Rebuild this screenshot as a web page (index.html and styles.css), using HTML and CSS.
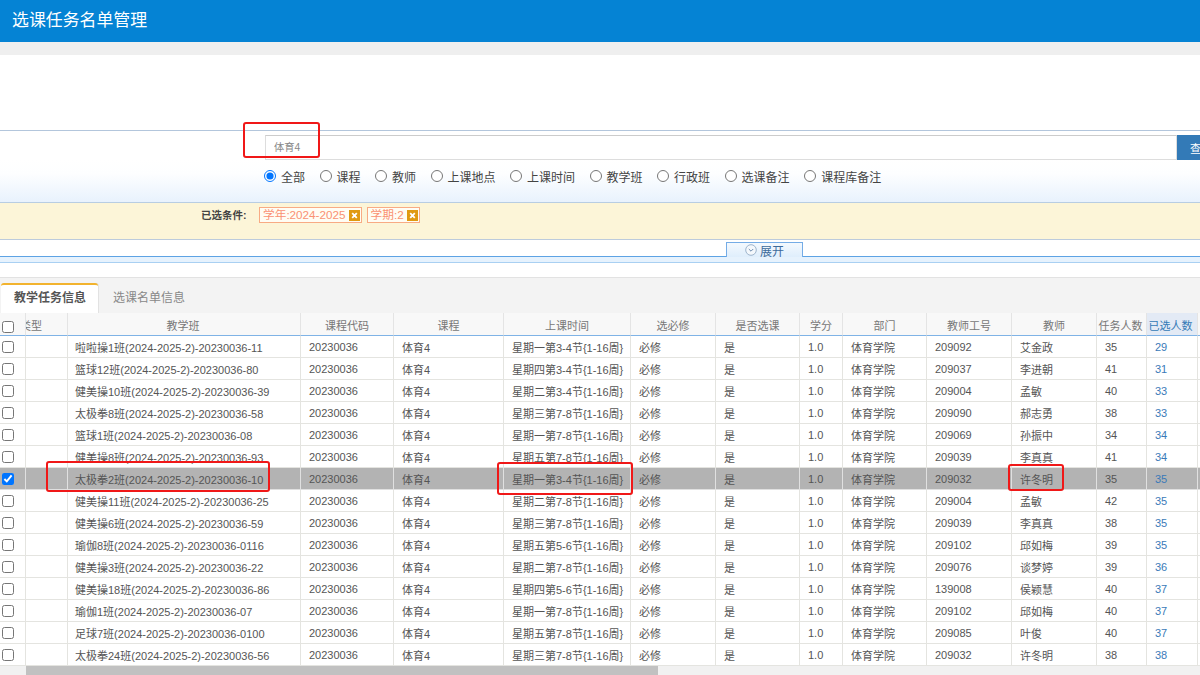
FILE: index.html
```html
<!DOCTYPE html>
<html lang="zh-CN">
<head>
  <meta charset="UTF-8" />
  <meta name="viewport" content="width=device-width, initial-scale=1.0" />
  <title>选课任务名单管理</title>
  <link rel="stylesheet" href="styles.css">
</head>
<body>
  <div class="page-title">选课任务名单管理</div>
  <div class="gray-strip"></div>
  <div class="blank-area"></div>

  <div class="search-panel">
    <div class="search-row">
      <input class="search-input" type="text" value="体育4">
      <button class="search-button">查询</button>
    </div>
    <div class="radio-row">
      <label class="radio-item"><input type="radio" name="scope" checked>全部</label>
      <label class="radio-item"><input type="radio" name="scope">课程</label>
      <label class="radio-item"><input type="radio" name="scope">教师</label>
      <label class="radio-item"><input type="radio" name="scope">上课地点</label>
      <label class="radio-item"><input type="radio" name="scope">上课时间</label>
      <label class="radio-item"><input type="radio" name="scope">教学班</label>
      <label class="radio-item"><input type="radio" name="scope">行政班</label>
      <label class="radio-item"><input type="radio" name="scope">选课备注</label>
      <label class="radio-item"><input type="radio" name="scope">课程库备注</label>
    </div>
  </div>

  <div class="filter-bar">
    <span class="filter-label">已选条件:</span>
    <span class="tag">学年:2024-2025<svg class="tag-x" viewBox="0 0 11 11"><rect width="11" height="11" fill="#e09a12"/><path d="M3.2 3.2l4.6 4.6M7.8 3.2L3.2 7.8" stroke="#fff" stroke-width="1.8"/></svg></span>
    <span class="tag">学期:2<svg class="tag-x" viewBox="0 0 11 11"><rect width="11" height="11" fill="#e09a12"/><path d="M3.2 3.2l4.6 4.6M7.8 3.2L3.2 7.8" stroke="#fff" stroke-width="1.8"/></svg></span>
  </div>

  <div class="expand-row">
    <div class="expand-tab">
      <svg class="expand-icon" viewBox="0 0 12 12"><circle cx="6" cy="6" r="5.3" fill="#f4f8fc" stroke="#9db4cc"/><path d="M3.8 5l2.2 2.2L8.2 5" fill="none" stroke="#6f8db0"/></svg>展开
    </div>
  </div>
  <div class="expand-band"></div>
  <div class="blank-gap"></div>

  <div class="tab-bar">
    <div class="tab active">教学任务信息</div>
    <div class="tab">选课名单信息</div>
  </div>

  <div class="table-wrap">
    <table class="task-table">
      <colgroup>
        <col class="c-check"><col class="c-type"><col class="c-class"><col class="c-code"><col class="c-course">
        <col class="c-time"><col class="c-req"><col class="c-sel"><col class="c-credit"><col class="c-dept">
        <col class="c-tid"><col class="c-teacher"><col class="c-task"><col class="c-chosen"><col class="c-more">
      </colgroup>
      <thead>
        <tr>
          <th class="check-cell"><input type="checkbox"></th>
          <th class="type-head">类型</th>
          <th class="class-cell">教学班</th><th>课程代码</th><th>课程</th><th>上课时间</th><th>选必修</th><th>是否选课</th>
          <th>学分</th><th>部门</th><th>教师工号</th><th>教师</th><th class="task-head">任务人数</th>
          <th class="sorted">已选人数</th><th class="more-head">选</th>
        </tr>
      </thead>
      <tbody>
        <tr><td class="check-cell"><input type="checkbox"></td><td></td><td class="class-cell">啦啦操1班(2024-2025-2)-20230036-11</td><td>20230036</td><td>体育4</td><td>星期一第3-4节{1-16周}</td><td>必修</td><td>是</td><td>1.0</td><td>体育学院</td><td>209092</td><td>艾金政</td><td>35</td><td class="num-link">29</td><td></td></tr>
        <tr><td class="check-cell"><input type="checkbox"></td><td></td><td class="class-cell">篮球12班(2024-2025-2)-20230036-80</td><td>20230036</td><td>体育4</td><td>星期四第3-4节{1-16周}</td><td>必修</td><td>是</td><td>1.0</td><td>体育学院</td><td>209037</td><td>李进朝</td><td>41</td><td class="num-link">31</td><td></td></tr>
        <tr><td class="check-cell"><input type="checkbox"></td><td></td><td class="class-cell">健美操10班(2024-2025-2)-20230036-39</td><td>20230036</td><td>体育4</td><td>星期二第3-4节{1-16周}</td><td>必修</td><td>是</td><td>1.0</td><td>体育学院</td><td>209004</td><td>孟敏</td><td>40</td><td class="num-link">33</td><td></td></tr>
        <tr><td class="check-cell"><input type="checkbox"></td><td></td><td class="class-cell">太极拳8班(2024-2025-2)-20230036-58</td><td>20230036</td><td>体育4</td><td>星期三第7-8节{1-16周}</td><td>必修</td><td>是</td><td>1.0</td><td>体育学院</td><td>209090</td><td>郝志勇</td><td>38</td><td class="num-link">33</td><td></td></tr>
        <tr><td class="check-cell"><input type="checkbox"></td><td></td><td class="class-cell">篮球1班(2024-2025-2)-20230036-08</td><td>20230036</td><td>体育4</td><td>星期一第7-8节{1-16周}</td><td>必修</td><td>是</td><td>1.0</td><td>体育学院</td><td>209069</td><td>孙振中</td><td>34</td><td class="num-link">34</td><td></td></tr>
        <tr><td class="check-cell"><input type="checkbox"></td><td></td><td class="class-cell">健美操8班(2024-2025-2)-20230036-93</td><td>20230036</td><td>体育4</td><td>星期五第7-8节{1-16周}</td><td>必修</td><td>是</td><td>1.0</td><td>体育学院</td><td>209039</td><td>李真真</td><td>41</td><td class="num-link">34</td><td></td></tr>
        <tr class="selected"><td class="check-cell"><input type="checkbox" checked></td><td></td><td class="class-cell">太极拳2班(2024-2025-2)-20230036-10</td><td>20230036</td><td>体育4</td><td>星期一第3-4节{1-16周}</td><td>必修</td><td>是</td><td>1.0</td><td>体育学院</td><td>209032</td><td>许冬明</td><td>35</td><td class="num-link">35</td><td></td></tr>
        <tr><td class="check-cell"><input type="checkbox"></td><td></td><td class="class-cell">健美操11班(2024-2025-2)-20230036-25</td><td>20230036</td><td>体育4</td><td>星期二第7-8节{1-16周}</td><td>必修</td><td>是</td><td>1.0</td><td>体育学院</td><td>209004</td><td>孟敏</td><td>42</td><td class="num-link">35</td><td></td></tr>
        <tr><td class="check-cell"><input type="checkbox"></td><td></td><td class="class-cell">健美操6班(2024-2025-2)-20230036-59</td><td>20230036</td><td>体育4</td><td>星期三第7-8节{1-16周}</td><td>必修</td><td>是</td><td>1.0</td><td>体育学院</td><td>209039</td><td>李真真</td><td>38</td><td class="num-link">35</td><td></td></tr>
        <tr><td class="check-cell"><input type="checkbox"></td><td></td><td class="class-cell">瑜伽8班(2024-2025-2)-20230036-0116</td><td>20230036</td><td>体育4</td><td>星期五第5-6节{1-16周}</td><td>必修</td><td>是</td><td>1.0</td><td>体育学院</td><td>209102</td><td>邱如梅</td><td>39</td><td class="num-link">35</td><td></td></tr>
        <tr><td class="check-cell"><input type="checkbox"></td><td></td><td class="class-cell">健美操3班(2024-2025-2)-20230036-22</td><td>20230036</td><td>体育4</td><td>星期二第7-8节{1-16周}</td><td>必修</td><td>是</td><td>1.0</td><td>体育学院</td><td>209076</td><td>谈梦婷</td><td>39</td><td class="num-link">36</td><td></td></tr>
        <tr><td class="check-cell"><input type="checkbox"></td><td></td><td class="class-cell">健美操18班(2024-2025-2)-20230036-86</td><td>20230036</td><td>体育4</td><td>星期四第5-6节{1-16周}</td><td>必修</td><td>是</td><td>1.0</td><td>体育学院</td><td>139008</td><td>侯颖慧</td><td>40</td><td class="num-link">37</td><td></td></tr>
        <tr><td class="check-cell"><input type="checkbox"></td><td></td><td class="class-cell">瑜伽1班(2024-2025-2)-20230036-07</td><td>20230036</td><td>体育4</td><td>星期一第7-8节{1-16周}</td><td>必修</td><td>是</td><td>1.0</td><td>体育学院</td><td>209102</td><td>邱如梅</td><td>40</td><td class="num-link">37</td><td></td></tr>
        <tr><td class="check-cell"><input type="checkbox"></td><td></td><td class="class-cell">足球7班(2024-2025-2)-20230036-0100</td><td>20230036</td><td>体育4</td><td>星期五第7-8节{1-16周}</td><td>必修</td><td>是</td><td>1.0</td><td>体育学院</td><td>209085</td><td>叶俊</td><td>40</td><td class="num-link">37</td><td></td></tr>
        <tr><td class="check-cell"><input type="checkbox"></td><td></td><td class="class-cell">太极拳24班(2024-2025-2)-20230036-56</td><td>20230036</td><td>体育4</td><td>星期三第7-8节{1-16周}</td><td>必修</td><td>是</td><td>1.0</td><td>体育学院</td><td>209032</td><td>许冬明</td><td>38</td><td class="num-link">38</td><td></td></tr>
      </tbody>
    </table>
  </div>
  <div class="h-scroll"><div class="h-thumb"></div></div>

  <!-- red boxes drawn over the screenshot -->
  <div class="mark mark-search"></div>
  <div class="mark mark-class"></div>
  <div class="mark mark-time"></div>
  <div class="mark mark-teacher"></div>
</body>
</html>
```

FILE: styles.css
```css
html, body {
  margin: 0;
  height: 675px;
  overflow: hidden;
}
body {
  position: relative;
  background-color: #fff;
  color: #555;
  font-family: "Liberation Sans", "Noto Sans CJK SC", sans-serif;
  font-size: 12px;
}
.page-title {
  height: 42px;
  padding-left: 12px;
  line-height: 42px;
  font-size: 16.9px;
  color: #fff;
  background-color: #0583d4;
}
.gray-strip {
  height: 13px;
  background-color: #efefef;
}
.blank-area {
  height: 75px;
}
.search-panel {
  box-sizing: border-box;
  height: 73px;
  padding-top: 4px;
  border-top: 1px solid #b3c6dc;
  border-bottom: 1px solid #b8cde2;
  background: linear-gradient(to bottom, #fff 40%, #fdfeff 60%, #e8f2fd 100%);
  overflow: hidden;
}
.search-row {
  display: flex;
  width: 1300px;
  padding-left: 265px;
}
.search-input {
  box-sizing: border-box;
  width: 912px;
  height: 25px;
  padding: 0 8px 2px;
  border: 1px solid #ddd;
  border-top-color: #ccc;
  font-family: inherit;
  font-size: 10.3px;
  color: #888;
  outline: none;
}
.search-button {
  width: 60px;
  height: 25px;
  padding: 0 0 0 13px;
  border: none;
  background-color: #337ab7;
  color: #fff;
  font-family: inherit;
  font-size: 11px;
  text-align: left;
}
.radio-row {
  display: flex;
  gap: 14.5px;
  padding: 8px 0 0 264px;
}
.radio-item {
  display: flex;
  align-items: center;
  gap: 5px;
  height: 16px;
  color: #444;
}
.radio-item input {
  width: 12px;
  height: 12px;
  margin: 0;
}
.filter-bar {
  box-sizing: border-box;
  display: flex;
  align-items: flex-start;
  height: 37px;
  padding: 4px 0 0 201px;
  border-bottom: 1px solid #bccbdc;
  background-color: #fcf5d8;
}
.filter-label {
  width: 58px;
  line-height: 16px;
  font-size: 10.5px;
  font-weight: bold;
  color: #444;
}
.tag {
  display: flex;
  align-items: center;
  height: 16px;
  margin-right: 5px;
  padding: 0 1px 0 3px;
  border: 1px solid #f8ab84;
  background-color: #fffdf4;
  color: #fa9272;
  font-size: 11.7px;
  line-height: 14px;
  box-sizing: border-box;
}
.tag-x {
  width: 11px;
  height: 11px;
  margin-left: 3px;
}
.expand-row {
  box-sizing: border-box;
  height: 17px;
  padding: 2px 0 0 726px;
  border-bottom: 1px solid #5da3e4;
}
.expand-tab {
  box-sizing: border-box;
  display: flex;
  align-items: center;
  justify-content: center;
  gap: 3px;
  width: 77px;
  height: 15px;
  border: 1px solid #74ace6;
  border-bottom: none;
  background: linear-gradient(to bottom, #f4f9fe, #dfeefc);
  color: #3d6b9b;
}
.expand-icon {
  width: 12px;
  height: 12px;
}
.expand-band {
  height: 5px;
  border-bottom: 1px solid #a9d0f2;
  background-color: #e6f2fd;
}
.blank-gap {
  height: 14px;
  border-bottom: 1px solid #e2e2e2;
}
.tab-bar {
  display: flex;
  box-sizing: border-box;
  height: 35px;
  padding: 5px 0 0 1px;
  background-color: #f3f3f3;
}
.tab {
  box-sizing: border-box;
  width: 97px;
  height: 30px;
  padding: 0 0 0 13px;
  border-top: 2px solid transparent;
  line-height: 27px;
  color: #888;
}
.tab + .tab {
  margin-left: 2px;
}
.tab.active {
  border-top-color: #f2b32e;
  border-radius: 3px 3px 0 0;
  background-color: #fff;
  box-shadow: 1px 0 0 #e2e2e2;
  font-weight: bold;
  color: #555;
}
.table-wrap {
  width: 1200px;
  overflow: hidden;
}
.task-table {
  width: 1260px;
  table-layout: fixed;
  border-collapse: separate;
  border-spacing: 0;
  font-size: 11px;
}
.c-check { width: 26px; }
.c-type { width: 42px; }
.c-class { width: 233px; }
.c-code { width: 93px; }
.c-course { width: 110px; }
.c-time { width: 127px; }
.c-req { width: 85px; }
.c-sel { width: 84px; }
.c-credit { width: 43px; }
.c-dept { width: 84px; }
.c-tid { width: 85px; }
.c-teacher { width: 85px; }
.c-task { width: 50px; }
.c-chosen { width: 51px; }
.c-more { width: 62px; }
.task-table th {
  box-sizing: border-box;
  height: 23px;
  padding: 1px 0 0;
  border-right: 1px solid #e4e4e4;
  border-bottom: 1px solid #7fb3e6;
  background-color: #f8f8f8;
  font-weight: normal;
  color: #777;
  overflow: hidden;
  white-space: nowrap;
}
.task-table th.class-cell, .task-table th.task-head {
  padding-right: 2px;
}
.task-table th.type-head {
  text-align: left;
  text-indent: -6px;
}
.task-table th.sorted {
  padding-right: 3px;
  background-color: #e3eaf5;
  color: #337ab7;
}
.task-table th.more-head {
  text-align: left;
  padding-left: 2px;
}
.task-table td {
  box-sizing: border-box;
  height: 22px;
  padding: 0 0 0 8px;
  border-right: 1px solid #e4e4e0;
  border-bottom: 1px solid #e4e4e0;
  white-space: nowrap;
  overflow: hidden;
}
.task-table td.class-cell {
  padding-left: 7px;
}
.task-table td.check-cell, .task-table th.check-cell {
  padding: 0 0 0 2px;
  text-align: left;
}
.check-cell input {
  display: block;
  width: 12px;
  height: 12px;
  margin: 0;
}
th.check-cell input {
  margin-top: 6px;
}
.task-table td.num-link {
  color: #3a7ab8;
}
.selected td {
  background-color: #b3b3b3;
  border-color: #e0e0e0;
}
.h-scroll {
  height: 9px;
  background-color: #f1f1f1;
}
.h-thumb {
  width: 632px;
  height: 9px;
  margin-left: 26px;
  background-color: #c1c1c1;
}
.mark {
  position: absolute;
  box-sizing: border-box;
  border: 2px solid #f01818;
  border-radius: 3px;
}
.mark-search { left: 243px; top: 122px; width: 77px; height: 36px; }
.mark-class { left: 46px; top: 461px; width: 224px; height: 31px; }
.mark-time { left: 497px; top: 462px; width: 136px; height: 33px; }
.mark-teacher { left: 1008px; top: 464px; width: 56px; height: 27px; }
```
